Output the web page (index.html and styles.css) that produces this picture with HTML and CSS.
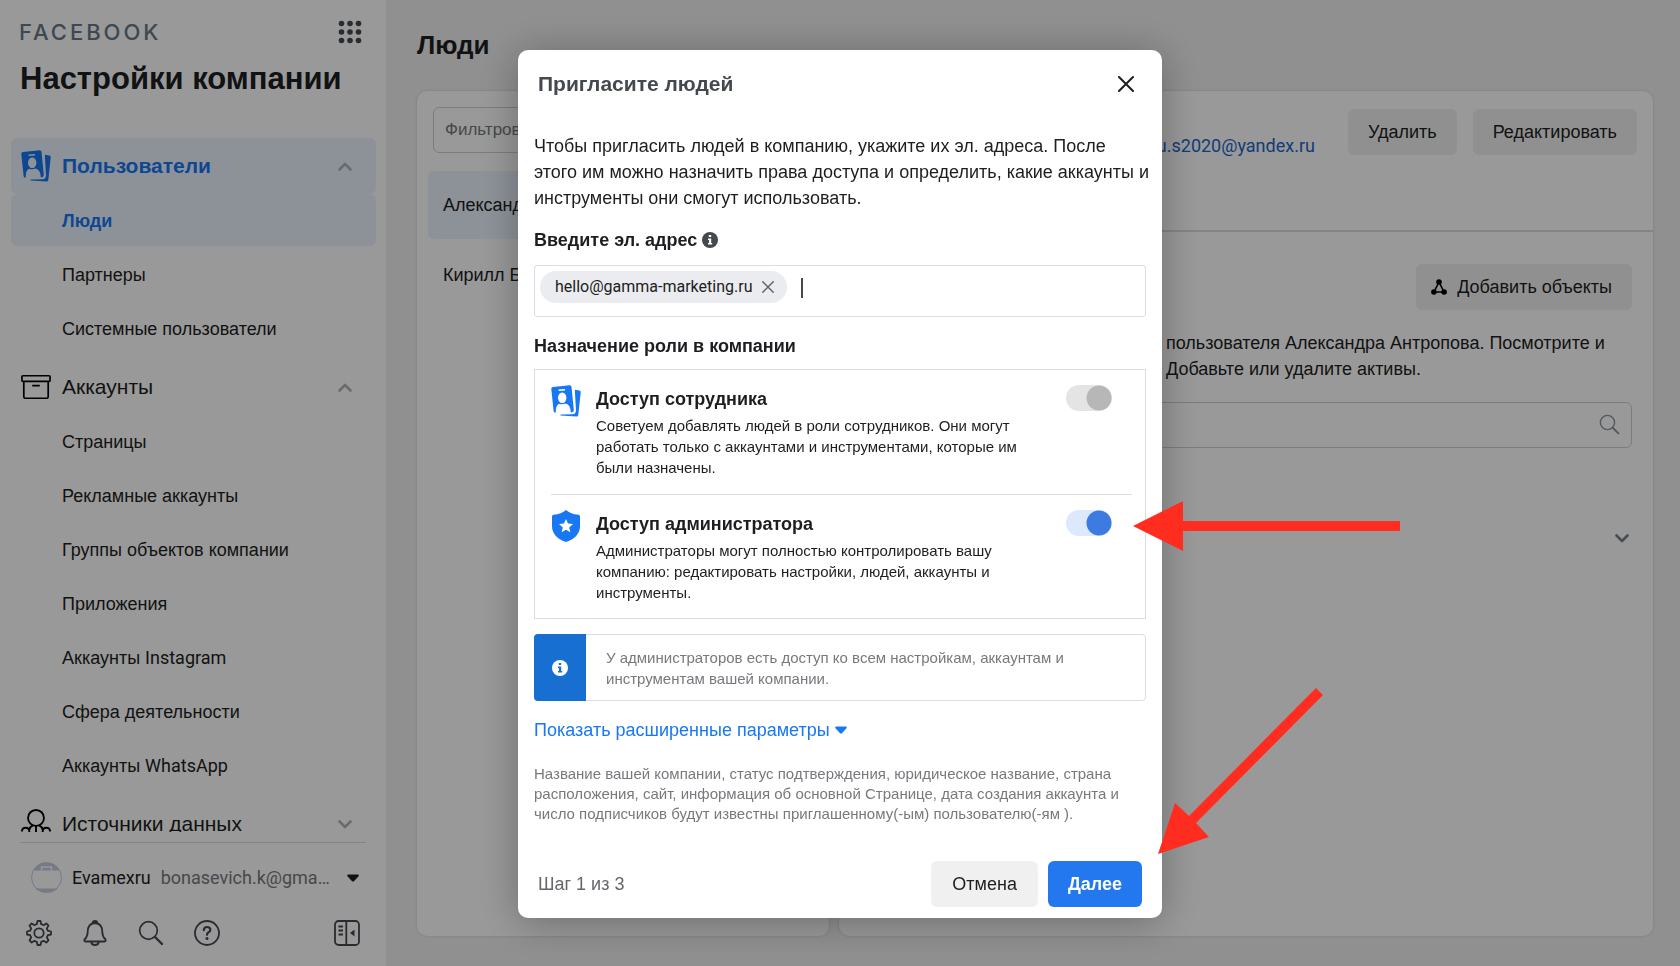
FILE: index.html
```
<!DOCTYPE html>
<html lang="ru">
<head>
  <meta charset="UTF-8">
  <title>Настройки компании</title>
  <link rel="stylesheet" href="styles.css">
</head>
<body>
  <!-- Shared icons -->
  <svg class="sprite" aria-hidden="true">
    <symbol id="icon-badge" viewBox="0 0 30 32">
      <path fill="currentColor" fill-rule="evenodd" d="M2 2 18.500.2q1.800-.2 2 1.500L22.800 25q0 2.300-2 2.300l-1 .1q-.3-7.900-5.300-8.900-3.500 1.500-6.500.3-3.500 1.700-3.200 8.700l-.8.100q-1.200 0-1.400-1.600L.3 4Q.2 2.200 2 2ZM7.500 4.400l.2 1.700 6.400-.5-.2-1.700ZM11.200 7.500a4.200 5.300 0 1 0 .01 0Z"/>
      <path fill="currentColor" d="m23.800 4.800 4.600.7q1.500.3 1.300 1.800L27.300 30q-.3 1.800-2 1.600L9.600 30.400q-.9-.9.500-.9l11.600-.3q3.300-.5 3.300-3.800Z"/>
    </symbol>
    <symbol id="icon-up" viewBox="0 0 14 9">
      <path d="M1.500 7.500 7 2l5.500 5.500" fill="none" stroke="currentColor" stroke-width="2.600" stroke-linecap="round" stroke-linejoin="round"/>
    </symbol>
    <symbol id="icon-down" viewBox="0 0 14 9">
      <path d="M1.500 1.500 7 7l5.500-5.500" fill="none" stroke="currentColor" stroke-width="2.600" stroke-linecap="round" stroke-linejoin="round"/>
    </symbol>
    <symbol id="icon-caret" viewBox="0 0 12 8">
      <path d="M1 .5h10q1.300.5.5 1.800L7.200 7q-1.200 1-2.400 0L.5 2.300Q-.3 1 1 .5Z" fill="currentColor"/>
    </symbol>
    <symbol id="icon-search" viewBox="0 0 26 26">
      <g fill="none" stroke="currentColor" stroke-linecap="round">
        <circle cx="10.500" cy="10.500" r="8.800" stroke-width="1.700"/>
        <path d="m17 17 7 7" stroke-width="2.400"/>
      </g>
    </symbol>
    <symbol id="icon-info" viewBox="0 0 16 16">
      <circle cx="8" cy="8" r="8" fill="currentColor"/>
      <path class="info-mark" d="M6.800 3h2.400v2H6.800zM6 6.500h3.200V11h1v1.500H6V11h1V8H6z"/>
    </symbol>
    <symbol id="icon-close" viewBox="0 0 16 16">
      <path d="m1 1 14 14M15 1 1 15" fill="none" stroke="currentColor" stroke-width="2" stroke-linecap="round"/>
    </symbol>
  </svg>

  <div class="page">
    <aside class="sidebar">
      <div class="brand">
        <span class="brand-name">FACEBOOK</span>
        <button class="icon-button" aria-label="Меню">
          <svg width="24" height="24" viewBox="0 0 24 24" fill="#444950">
            <circle cx="3.500" cy="3.500" r="2.800"/><circle cx="12" cy="3.500" r="2.800"/><circle cx="20.500" cy="3.500" r="2.800"/>
            <circle cx="3.500" cy="12" r="2.800"/><circle cx="12" cy="12" r="2.800"/><circle cx="20.500" cy="12" r="2.800"/>
            <circle cx="3.500" cy="20.500" r="2.800"/><circle cx="12" cy="20.500" r="2.800"/><circle cx="20.500" cy="20.500" r="2.800"/>
          </svg>
        </button>
      </div>
      <h1>Настройки компании</h1>

      <nav class="nav">
        <button class="nav-group active">
          <svg class="nav-icon" width="30" height="32"><use href="#icon-badge"/></svg>
          <span>Пользователи</span>
          <svg class="nav-chevron" width="14" height="9"><use href="#icon-up"/></svg>
        </button>
        <a class="nav-item active" href="#">Люди</a>
        <a class="nav-item" href="#">Партнеры</a>
        <a class="nav-item" href="#">Системные пользователи</a>
        <button class="nav-group">
          <svg class="nav-icon" width="32" height="26" viewBox="0 0 32 26" fill="none" stroke="#000" stroke-width="1.800">
            <rect x="1" y="1" width="30" height="6" rx="1"/>
            <path d="M3 7v16.500q0 1.500 1.500 1.500h23q1.500 0 1.500-1.500V7M12 11.500h8"/>
          </svg>
          <span>Аккаунты</span>
          <svg class="nav-chevron" width="14" height="9"><use href="#icon-up"/></svg>
        </button>
        <a class="nav-item" href="#">Страницы</a>
        <a class="nav-item" href="#">Рекламные аккаунты</a>
        <a class="nav-item" href="#">Группы объектов компании</a>
        <a class="nav-item" href="#">Приложения</a>
        <a class="nav-item" href="#">Аккаунты <span class="latin">Instagram</span></a>
        <a class="nav-item" href="#">Сфера деятельности</a>
        <a class="nav-item" href="#">Аккаунты <span class="latin">WhatsApp</span></a>
        <button class="nav-group">
          <svg class="nav-icon" width="32" height="32" viewBox="0 0 32 32" fill="none" stroke="#000" stroke-width="2">
            <circle cx="16" cy="9.500" r="8.500"/>
            <path d="M1 24q0-4 4-4 4 0 4 5M31 24q0-4-4-4-4 0-4 5M9 22q.5-3 3.500-4.500M23 22q-.5-3-3.500-4.500M16 18v7"/>
          </svg>
          <span>Источники данных</span>
          <svg class="nav-chevron" width="14" height="9"><use href="#icon-down"/></svg>
        </button>
      </nav>

      <footer class="sidebar-footer">
        <button class="account">
          <svg width="31" height="31" viewBox="0 0 31 31">
            <circle cx="15.500" cy="15.500" r="15" fill="#fff" stroke="#c5cbe0"/>
            <path fill="#c5cbe0" d="M2.600 8.500Q7 .5 15.500.5t12.900 8ZM4 26.500h23q-4.500 4-11.500 4t-11.500-4Z"/>
            <path fill="none" stroke="#fff" stroke-width="1.500" d="M10.500 8.500V5h10v3.500"/>
          </svg>
          <span class="account-name">Evamexru</span>
          <span class="account-mail">bonasevich.k@gma…</span>
          <svg class="account-caret" width="12" height="8"><use href="#icon-caret"/></svg>
        </button>
        <div class="tools">
          <button class="icon-button" aria-label="Настройки">
            <svg width="26" height="26" viewBox="0 0 26 26" fill="none" stroke="currentColor" stroke-width="1.800" stroke-linejoin="round">
              <path d="m11.500 1-.7 3.200q-1.200.3-2.300 1L5.700 3.400 3.500 5.600l1.700 2.800q-.7 1.100-1 2.300L1 11.500v3l3.200.7q.3 1.200 1 2.300l-1.700 2.800 2.200 2.200 2.800-1.700q1.100.7 2.300 1l.7 3.200h3l.7-3.200q1.200-.3 2.300-1l2.800 1.700 2.200-2.200-1.700-2.800q.7-1.100 1-2.300l3.200-.7v-3l-3.200-.8q-.3-1.200-1-2.300l1.700-2.800-2.200-2.200-2.800 1.800q-1.100-.7-2.300-1L14.500 1Z"/>
              <circle cx="13" cy="13" r="4.700"/>
            </svg>
          </button>
          <button class="icon-button" aria-label="Уведомления">
            <svg width="26" height="26" viewBox="0 0 26 26" fill="none" stroke="currentColor" stroke-width="1.800" stroke-linejoin="round">
              <path d="M13 3q7.300.5 7.300 9 0 4.500 3.200 7.500.8 1.800-1 2h-19q-1.800-.2-1-2 3.200-3 3.200-7.500 0-8.500 7.300-9ZM10.500 3.300q.3-2.300 2.500-2.300t2.500 2.300M9 21.500q.5 3.500 4 3.500t4-3.500"/>
            </svg>
          </button>
          <button class="icon-button" aria-label="Поиск">
            <svg width="26" height="26"><use href="#icon-search"/></svg>
          </button>
          <button class="icon-button" aria-label="Справка">
            <svg width="26" height="26" viewBox="0 0 26 26" fill="none" stroke="currentColor" stroke-width="1.800" stroke-linecap="round">
              <circle cx="13" cy="13" r="12"/>
              <path stroke-width="2.200" d="M9.800 10.200q.2-3.200 3.300-3.200 3 0 3.200 2.700 0 1.700-1.800 2.600-1.500.8-1.500 2.500"/>
              <circle cx="13" cy="18.500" r="1.500" fill="currentColor" stroke="none"/>
            </svg>
          </button>
          <button class="icon-button collapse" aria-label="Свернуть">
            <svg width="26" height="26" viewBox="0 0 26 26" fill="none" stroke="currentColor" stroke-width="1.800">
              <rect x="1" y="1" width="24" height="24" rx="3.500"/>
              <path d="M12.300 1v24M4.500 6.500H9M4.500 10.500H9M4.500 14.500H9"/>
              <path d="m20.500 9.500-4.500 3.500 4.500 3.500Z" fill="currentColor" stroke="none"/>
            </svg>
          </button>
        </div>
      </footer>
    </aside>

    <main class="content">
      <h2>Люди</h2>
      <div class="panels">
        <section class="panel people">
          <input class="field" type="text" placeholder="Фильтров" aria-label="Фильтр">
          <ul class="people-list">
            <li class="person selected">Александр</li>
            <li class="person">Кирилл Б</li>
          </ul>
        </section>
        <section class="panel details">
          <div class="details-header">
            <a class="mail-link" href="#">u.s2020@yandex.ru</a>
            <button class="button">Удалить</button>
            <button class="button">Редактировать</button>
          </div>
          <div class="assets">
            <button class="button with-icon">
              <svg width="16" height="16" viewBox="0 0 16 16">
                <path d="M8 3 3 13h10Z" fill="none" stroke="#000" stroke-width="1.600"/>
                <circle cx="8" cy="3" r="2.800"/><circle cx="2.900" cy="13" r="2.800"/><circle cx="13.100" cy="13" r="2.800"/>
              </svg>
              Добавить объекты
            </button>
            <p class="assets-text">пользователя Александра Антропова. Посмотрите и<br>Добавьте или удалите активы.</p>
            <div class="search">
              <input class="field" type="text" aria-label="Поиск объектов">
              <svg class="search-icon" width="21" height="21"><use href="#icon-search"/></svg>
            </div>
            <button class="icon-button expand" aria-label="Развернуть">
              <svg width="14" height="9"><use href="#icon-down"/></svg>
            </button>
          </div>
        </section>
      </div>
    </main>
  </div>

  <!-- Invite people modal -->
  <div class="overlay">
    <div class="modal" role="dialog" aria-labelledby="inviteTitle">
      <div class="modal-header">
        <h3 id="inviteTitle">Пригласите людей</h3>
        <button class="icon-button" aria-label="Закрыть">
          <svg width="16" height="16"><use href="#icon-close"/></svg>
        </button>
      </div>

      <div class="modal-body">
        <p class="intro">Чтобы пригласить людей в компанию, укажите их эл. адреса. После этого им можно назначить права доступа и определить, какие аккаунты и инструменты они смогут использовать.</p>

        <label class="label" for="email">Введите эл. адрес
          <svg class="info" width="16" height="16"><use href="#icon-info"/></svg>
        </label>
        <div class="email-box">
          <span class="chip">hello@gamma-marketing.ru
            <button class="icon-button" aria-label="Убрать">
              <svg width="12" height="12"><use href="#icon-close"/></svg>
            </button>
          </span>
          <span class="caret"></span>
          <input id="email" type="text">
        </div>

        <h4 class="label">Назначение роли в компании</h4>
        <div class="roles">
          <div class="role">
            <svg class="role-icon" width="30" height="32"><use href="#icon-badge"/></svg>
            <div class="role-text">
              <label for="roleEmployee">Доступ сотрудника</label>
              <p>Советуем добавлять людей в роли сотрудников. Они могут работать только с аккаунтами и инструментами, которые им были назначены.</p>
            </div>
            <input class="toggle muted" type="checkbox" id="roleEmployee">
          </div>
          <div class="role">
            <svg class="role-icon" width="30" height="32" viewBox="0 0 30 32">
              <path fill="#1877f2" d="M15 0q4.500 4 12.500 4.800 1.500.2 1.500 1.700v9.500q0 11-14 16Q1 27 1 16V6.500q0-1.500 1.500-1.700Q10.500 4 15 0Z"/>
              <path fill="#fff" d="m15 9 2 4.600 5 .5-3.800 3.300 1.200 4.900-4.400-2.600-4.400 2.600 1.200-4.900L8 14.100l5-.5Z"/>
            </svg>
            <div class="role-text">
              <label for="roleAdmin">Доступ администратора</label>
              <p>Администраторы могут полностью контролировать вашу компанию: редактировать настройки, людей, аккаунты и инструменты.</p>
            </div>
            <input class="toggle" type="checkbox" id="roleAdmin" checked>
          </div>
        </div>

        <div class="notice">
          <div class="notice-icon"><svg width="16" height="16"><use href="#icon-info"/></svg></div>
          <p>У администраторов есть доступ ко всем настройкам, аккаунтам и инструментам вашей компании.</p>
        </div>

        <a class="more" href="#">Показать расширенные параметры
          <svg width="12" height="8"><use href="#icon-caret"/></svg>
        </a>

        <p class="hint">Название вашей компании, статус подтверждения, юридическое название, страна расположения, сайт, информация об основной Странице, дата создания аккаунта и число подписчиков будут известны приглашенному(-ым) пользователю(-ям ).</p>
      </div>

      <div class="modal-footer">
        <span class="step">Шаг 1 из 3</span>
        <button class="button">Отмена</button>
        <button class="button primary">Далее</button>
      </div>

      <!-- Pointer arrows -->
      <svg class="arrow arrow-toggle" width="267" height="50" viewBox="0 0 267 50">
        <path fill="#ff2d1f" d="M0 25 50 0v20h217v10H50v20Z"/>
      </svg>
      <svg class="arrow arrow-next" width="166" height="166" viewBox="0 0 166 166">
        <path fill="#ff2d1f" d="m0 166 17-51 14 13L158 0l7 7L38 135l13 14Z"/>
      </svg>
    </div>
  </div>
</body>
</html>
```
FILE: styles.css
```
* {
  box-sizing: border-box;
}
body {
  margin: 0;
  font-family: "Liberation Sans", Arial, sans-serif;
  font-size: 18px;
  line-height: 26px;
  color: #1c1e21;
  background-color: #f0f0f0;
}
h1, h2, h3, h4, p, ul {
  margin: 0;
  padding: 0;
}
button, input {
  font: inherit;
  color: inherit;
}
a {
  text-decoration: none;
}
svg {
  display: block;
  flex-shrink: 0;
}
.sprite {
  position: absolute;
  width: 0;
  height: 0;
}
.latin {
  font-family: Roboto, sans-serif;
}
.icon-button {
  display: flex;
  padding: 0;
  border: none;
  background: none;
  cursor: pointer;
}
.page {
  display: flex;
  height: 100vh;
}

/* Sidebar */
.sidebar {
  display: flex;
  flex-direction: column;
  width: 386px;
  flex-shrink: 0;
  background-color: #fff;
}
.brand {
  display: flex;
  justify-content: space-between;
  align-items: center;
  height: 46px;
  padding: 18px 24px 0 19px;
}
.brand-name {
  font-family: Inter, sans-serif;
  font-size: 22px;
  font-weight: 500;
  letter-spacing: 3px;
  color: #67788a;
}
h1 {
  padding: 13px 20px 0;
  font-size: 31px;
  line-height: 40px;
}
.nav {
  flex: 1;
  min-height: 0;
  margin-top: 39px;
  padding: 0 10px 0 11px;
  overflow: hidden;
}
.nav-group {
  display: flex;
  align-items: center;
  gap: 11px;
  width: 100%;
  height: 56px;
  margin-top: 5px;
  padding: 0 24px 0 10px;
  border: none;
  border-radius: 6px;
  background: none;
  font-size: 21px;
  text-align: left;
  cursor: pointer;
}
.nav-group:first-child {
  margin-top: 0;
}
.nav-icon {
  width: 30px;
  overflow: visible;
}
.nav-chevron {
  margin-left: auto;
  color: #b0b3b8;
}
.nav-item {
  display: block;
  height: 52px;
  margin-bottom: 2px;
  padding: 14px 51px 12px;
  border-radius: 6px;
  color: inherit;
}
.nav .active {
  background-color: #ecf3ff;
  color: #1877f2;
  font-weight: bold;
}
.sidebar-footer {
  margin: 10px 20px 0;
  border-top: 1px solid #dadde1;
}
.account {
  display: flex;
  align-items: center;
  width: 100%;
  height: 69px;
  padding: 0 7px 0 11px;
  border: none;
  background: none;
  font-family: Roboto, sans-serif;
  cursor: pointer;
}
.account-name {
  margin-left: 10px;
}
.account-mail {
  margin-left: 10px;
  color: #77797d;
}
.account-caret {
  margin-left: auto;
}
.tools {
  display: flex;
  align-items: center;
  gap: 30px;
  height: 54px;
  padding: 0 6px 12px;
  color: #444950;
}
.collapse {
  margin-left: auto;
}

/* Main content */
.content {
  flex: 1;
  display: flex;
  flex-direction: column;
  min-width: 0;
  padding: 30px 27px 30px 31px;
}
h2 {
  font-size: 26px;
  line-height: 30px;
}
.panels {
  flex: 1;
  display: grid;
  grid-template-columns: 412px 1fr;
  gap: 10px;
  margin-top: 31px;
}
.panel {
  border-radius: 10px;
  background-color: #fff;
  box-shadow: 0 0 3px rgba(0, 0, 0, 0.15);
}
.people {
  padding: 16px 11px;
}
.field {
  height: 46px;
  padding: 0 11px;
  border: 1px solid #ccd0d5;
  border-radius: 6px;
  background: none;
  font-size: 17px;
}
.field::placeholder {
  color: #77797d;
}
.people .field {
  width: calc(100% - 10px);
  margin: 0 5px;
}
.people-list {
  margin-top: 18px;
  list-style: none;
}
.person {
  margin-bottom: 2px;
  padding: 21px 15px;
  border-radius: 6px;
}
.selected {
  background-color: #ecf3ff;
}
.button {
  height: 46px;
  padding: 0 20px;
  border: none;
  border-radius: 6px;
  background-color: #f0f0f0;
  cursor: pointer;
}
.details-header {
  display: flex;
  justify-content: flex-end;
  align-items: flex-start;
  gap: 16px;
  height: 141px;
  padding: 18px 16px 0;
  border-bottom: 2px solid #dadde1;
}
.mail-link {
  margin: 24px 17px 0 0;
  font-family: Roboto, sans-serif;
  color: #1b66c9;
}
.assets {
  display: flex;
  flex-direction: column;
  align-items: flex-end;
  padding: 32px 21px;
}
.with-icon {
  display: flex;
  align-items: center;
  gap: 10px;
  padding: 0 20px 0 15px;
}
/* Text column starts right of the dialog */
.assets-text {
  align-self: stretch;
  margin-top: 20px;
  padding-left: 306px;
}
.search {
  position: relative;
  width: 100%;
  padding-left: 16px;
  margin-top: 20px;
}
.search .field {
  width: 100%;
}
.search-icon {
  position: absolute;
  right: 12px;
  top: 12px;
  color: #8d949e;
}
.expand {
  margin: 86px 3px 0 0;
  color: #77808c;
}

/* Modal */
.overlay {
  position: fixed;
  inset: 0;
  display: flex;
  justify-content: center;
  align-items: flex-start;
  padding-top: 50px;
  background-color: rgba(0, 0, 0, 0.4);
}
.modal {
  position: relative;
  width: 644px;
  border-radius: 10px;
  background-color: #fff;
  box-shadow: 0 4px 40px rgba(0, 0, 0, 0.3);
}
.modal-header {
  display: flex;
  justify-content: space-between;
  align-items: center;
  height: 67px;
  padding: 0 28px 0 20px;
}
h3 {
  font-size: 21px;
  color: #444950;
}
.modal-body {
  padding: 16px 16px 0;
}
.intro {
  margin-right: -5px;
}
.label {
  display: flex;
  align-items: center;
  gap: 5px;
  margin-top: 16px;
  font-size: 18px;
  font-weight: bold;
}
.info {
  color: #444950;
}
.info-mark {
  fill: var(--mark, #fff);
}
.email-box {
  display: flex;
  align-items: flex-start;
  height: 52px;
  margin: 12px 0 15px;
  padding: 5px;
  border: 1px solid #dadde1;
  border-radius: 3px;
}
.email-box input {
  flex: 1;
  min-width: 0;
  height: 32px;
  padding: 0;
  border: none;
  outline: none;
}
.chip {
  display: flex;
  align-items: center;
  gap: 10px;
  height: 32px;
  padding: 0 13px 0 15px;
  border-radius: 16px;
  background-color: #ebecf0;
  font-family: Roboto, sans-serif;
  font-size: 16px;
}
.chip .icon-button {
  color: #606770;
}
.caret {
  width: 2px;
  height: 20px;
  margin: 7px 0 0 14px;
  background-color: #444950;
}
.roles {
  margin-top: 10px;
  padding: 0 13px 0 16px;
  border: 1px solid #dadde1;
}
.role {
  display: flex;
  align-items: flex-start;
  height: 124px;
  padding: 15px 20px 0 0;
}
.role + .role {
  border-top: 1px solid #dadde1;
}
.role-icon {
  color: #1877f2;
}
.role-text {
  flex: 1;
  margin: 1px 32px 0 15px;
}
.role-text label {
  display: block;
  margin-bottom: 3px;
  font-size: 18px;
  font-weight: bold;
}
.role-text p, .notice p {
  font-size: 15px;
  line-height: 21px;
}
.toggle {
  appearance: none;
  width: 46px;
  height: 26px;
  margin: 0;
  border-radius: 13px;
  background: radial-gradient(circle at 33px 13px, #3b7be2 12px, #dce9fc 13px);
  cursor: pointer;
}
.toggle.muted {
  background: radial-gradient(circle at 33px 13px, #b7b7b7 12px, #e4e4e4 13px);
}
.notice {
  display: flex;
  margin-top: 15px;
  border: 1px solid #dadde1;
  border-radius: 4px;
  color: #77797d;
}
.notice-icon {
  --mark: #166fd1;
  display: flex;
  align-items: center;
  justify-content: center;
  width: 52px;
  margin: -1px 0 -1px -1px;
  border-radius: 4px 0 0 4px;
  background-color: #166fd1;
  color: #fff;
}
.notice p {
  flex: 1;
  padding: 12px 20px 11px;
}
.more {
  display: flex;
  align-items: center;
  gap: 5px;
  margin-top: 16px;
  color: #1877f2;
}
.hint {
  margin-top: 21px;
  font-size: 15px;
  line-height: 20px;
  color: #77797d;
}
.modal-footer {
  display: flex;
  align-items: center;
  gap: 10px;
  padding: 37px 20px 11px;
}
.modal-footer .button {
  padding: 0 21px;
}
.step {
  margin-right: auto;
  color: #65676b;
}
.modal-footer .primary {
  padding: 0 20px;
  background-color: #2378f0;
  color: #fff;
  font-weight: bold;
}
.arrow {
  position: absolute;
  pointer-events: none;
}
.arrow-toggle {
  left: 615px;
  top: 451px;
}
.arrow-next {
  left: 640px;
  top: 638px;
}
```
